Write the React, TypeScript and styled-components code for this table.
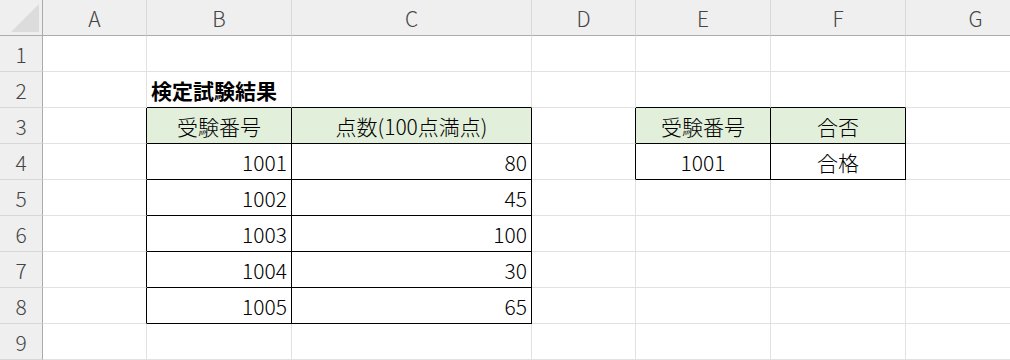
import React from "react";
import styled, { createGlobalStyle } from "styled-components";

const GlobalStyle = createGlobalStyle`
  html, body {
    margin: 0;
    padding: 0;
    background: #ffffff;
    overflow: hidden;
  }
  body {
    font-family: "Noto Sans CJK JP", "Noto Sans", sans-serif;
  }
`;

const GRID_LINE = "#e1e1e1";
const HEADER_LINE = "#ababab";
const HEADER_BG = "#efefef";
const FILL_GREEN = "#e2efda";

const COLUMNS = ["A", "B", "C", "D", "E", "F", "G"];
const COLUMN_WIDTHS = [104, 145, 240, 104, 135, 135, 140];
const ROW_COUNT = 9;

type Align = "left" | "center" | "right";

interface CellData {
  text: string;
  align?: Align;
  bold?: boolean;
  fill?: string;
}

const cells: Record<string, CellData> = {
  B2: { text: "検定試験結果", bold: true },
  B3: { text: "受験番号", align: "center", fill: FILL_GREEN },
  C3: { text: "点数(100点満点)", align: "center", fill: FILL_GREEN },
  B4: { text: "1001", align: "right" },
  C4: { text: "80", align: "right" },
  B5: { text: "1002", align: "right" },
  C5: { text: "45", align: "right" },
  B6: { text: "1003", align: "right" },
  C6: { text: "100", align: "right" },
  B7: { text: "1004", align: "right" },
  C7: { text: "30", align: "right" },
  B8: { text: "1005", align: "right" },
  C8: { text: "65", align: "right" },
  E3: { text: "受験番号", align: "center", fill: FILL_GREEN },
  F3: { text: "合否", align: "center", fill: FILL_GREEN },
  E4: { text: "1001", align: "center" },
  F4: { text: "合格", align: "center" },
};

// ranges drawn with thin black borders: [firstCol, firstRow, lastCol, lastRow]
const borderedRanges: [number, number, number, number][] = [
  [1, 3, 2, 8],
  [4, 3, 5, 4],
];

const inRange = (col: number, row: number) =>
  borderedRanges.some(
    ([c1, r1, c2, r2]) => col >= c1 && col <= c2 && row >= r1 && row <= r2
  );

const Sheet = styled.div`
  display: grid;
  grid-template-columns: 43px ${COLUMN_WIDTHS.map((w) => `${w}px`).join(" ")};
  grid-auto-rows: 36px;
  width: 1010px;
  height: 360px;
  overflow: hidden;
`;

const Corner = styled.div`
  background: ${HEADER_BG};
  border-right: 1px solid ${HEADER_LINE};
  border-bottom: 1px solid ${HEADER_LINE};
  display: flex;
  align-items: flex-end;
  justify-content: flex-end;
  padding: 0 2px 2px 0;
`;

const CornerMark = styled.svg`
  width: 29px;
  height: 29px;
  display: block;
`;

const ColumnHeader = styled.div`
  background: ${HEADER_BG};
  border-right: 1px solid #d8d8d8;
  border-bottom: 1px solid ${HEADER_LINE};
  display: flex;
  align-items: center;
  justify-content: center;
  font-size: 21px;
  font-weight: 300;
  color: #444444;
`;

const RowHeader = styled.div`
  background: ${HEADER_BG};
  border-right: 1px solid ${HEADER_LINE};
  border-bottom: 1px solid #d8d8d8;
  display: flex;
  align-items: center;
  justify-content: center;
  font-size: 21px;
  font-weight: 300;
  color: #444444;
`;

const Cell = styled.div<{
  $align: Align;
  $bold: boolean;
  $fill?: string;
  $rightColor: string;
  $bottomColor: string;
}>`
  box-sizing: border-box;
  border-right: 1px solid ${({ $rightColor }) => $rightColor};
  border-bottom: 1px solid ${({ $bottomColor }) => $bottomColor};
  background: ${({ $fill }) => $fill ?? "#ffffff"};
  display: flex;
  align-items: center;
  justify-content: ${({ $align }) =>
    $align === "right" ? "flex-end" : $align === "center" ? "center" : "flex-start"};
  padding: 0 4px;
  font-size: 21px;
  font-weight: ${({ $bold }) => ($bold ? 700 : 300)};
  color: #000000;
  white-space: nowrap;
  overflow: visible;
`;

function CornerCell() {
  return (
    <Corner>
      <CornerMark viewBox="0 0 29 29">
        <polygon points="0,28 28,28 28,0" fill="#dcdcdc" />
      </CornerMark>
    </Corner>
  );
}

export default function App() {
  const rows = Array.from({ length: ROW_COUNT }, (_, i) => i + 1);

  return (
    <>
      <GlobalStyle />
      <Sheet>
        <CornerCell />
        {COLUMNS.map((c) => (
          <ColumnHeader key={c}>{c}</ColumnHeader>
        ))}
        {rows.map((row) => (
          <React.Fragment key={row}>
            <RowHeader>{row}</RowHeader>
            {COLUMNS.map((c, col) => {
              const data = cells[`${c}${row}`];
              const rightBlack = inRange(col, row) || inRange(col + 1, row);
              const bottomBlack = inRange(col, row) || inRange(col, row + 1);
              return (
                <Cell
                  key={c}
                  $align={data?.align ?? "left"}
                  $bold={!!data?.bold}
                  $fill={data?.fill}
                  $rightColor={rightBlack ? "#000000" : GRID_LINE}
                  $bottomColor={bottomBlack ? "#000000" : GRID_LINE}
                >
                  {data?.text}
                </Cell>
              );
            })}
          </React.Fragment>
        ))}
      </Sheet>
    </>
  );
}
